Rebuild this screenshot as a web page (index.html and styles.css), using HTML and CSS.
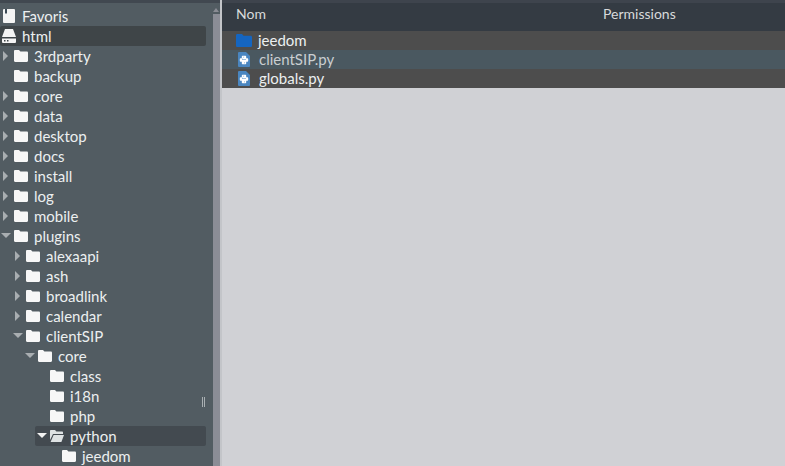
FILE: index.html
```html
<!DOCTYPE html>
<html lang="fr">
<head>
<meta charset="utf-8">
<title>Fichiers</title>
<link rel="stylesheet" href="styles.css">
</head>
<body>
<svg class="defs" width="0" height="0" aria-hidden="true">
  <symbol id="folder" viewBox="0 0 14 12"><path d="M1.200 0H5l1.400 1.600h6.400c.7 0 1.200.5 1.200 1.200v8c0 .7-.5 1.200-1.200 1.200H1.200C.5 12 0 11.500 0 10.800V1.200C0 .5.500 0 1.200 0z"/></symbol>
  <symbol id="pyfile" viewBox="0 0 12 15"><path fill="#4a86c0" d="M1 0h7l4 4v10a1 1 0 0 1-1 1H1a1 1 0 0 1-1-1V1a1 1 0 0 1 1-1z"/><path fill="#fff" d="M4.800 3.800h2.400c.6 0 1 .4 1 1v1.400h1c.6 0 1 .4 1 1v1.600c0 .6-.4 1-1 1h-1v1.400c0 .6-.4 1-1 1H4.800c-.6 0-1-.4-1-1V9.800h-1c-.6 0-1-.4-1-1V7.200c0-.6.400-1 1-1h1V4.800c0-.6.400-1 1-1z"/><path fill="#4a86c0" d="M5 7.400h3v.6H4.400v-1c0-.3.300-.6.600-.6zM5.300 4.800h.8v.8h-.8zM6.200 10.400h.8v.8h-.8z"/></symbol>
</svg>
<div class="app">
  <aside class="sidebar">
    <div class="tree">
      <div class="row root"><svg class="root-icon" viewBox="0 0 12 14"><path fill="#f4f4f4" d="M1 0h10a1 1 0 0 1 1 1v12a1 1 0 0 1-1 1H1a1 1 0 0 1-1-1V1a1 1 0 0 1 1-1z"/><path fill="#3c4a55" d="M2 0h2v5L3 4 2 5z"/></svg><span>Favoris</span></div>
      <div class="row root selected"><svg class="root-icon drive" viewBox="0 0 14 14"><path fill="#f4f4f4" d="M3 0h8l3 8H0z"/><path fill="#f4f4f4" d="M0 9.500h14V13a1 1 0 0 1-1 1H1a1 1 0 0 1-1-1z"/><path fill="#3c4448" d="M2 11h1.500v1.500H2zM5 11h1.500v1.500H5z"/></svg><span>html</span></div>
      <div class="row d0"><i class="arrow closed"></i><svg class="folder"><use href="#folder"/></svg><span>3rdparty</span></div>
      <div class="row d0"><i class="arrow none"></i><svg class="folder"><use href="#folder"/></svg><span>backup</span></div>
      <div class="row d0"><i class="arrow closed"></i><svg class="folder"><use href="#folder"/></svg><span>core</span></div>
      <div class="row d0"><i class="arrow closed"></i><svg class="folder"><use href="#folder"/></svg><span>data</span></div>
      <div class="row d0"><i class="arrow closed"></i><svg class="folder"><use href="#folder"/></svg><span>desktop</span></div>
      <div class="row d0"><i class="arrow closed"></i><svg class="folder"><use href="#folder"/></svg><span>docs</span></div>
      <div class="row d0"><i class="arrow closed"></i><svg class="folder"><use href="#folder"/></svg><span>install</span></div>
      <div class="row d0"><i class="arrow closed"></i><svg class="folder"><use href="#folder"/></svg><span>log</span></div>
      <div class="row d0"><i class="arrow closed"></i><svg class="folder"><use href="#folder"/></svg><span>mobile</span></div>
      <div class="row d0"><i class="arrow open"></i><svg class="folder"><use href="#folder"/></svg><span>plugins</span></div>
      <div class="row d1"><i class="arrow closed"></i><svg class="folder"><use href="#folder"/></svg><span>alexaapi</span></div>
      <div class="row d1"><i class="arrow closed"></i><svg class="folder"><use href="#folder"/></svg><span>ash</span></div>
      <div class="row d1"><i class="arrow closed"></i><svg class="folder"><use href="#folder"/></svg><span>broadlink</span></div>
      <div class="row d1"><i class="arrow closed"></i><svg class="folder"><use href="#folder"/></svg><span>calendar</span></div>
      <div class="row d1"><i class="arrow open"></i><svg class="folder"><use href="#folder"/></svg><span>clientSIP</span></div>
      <div class="row d2"><i class="arrow open"></i><svg class="folder"><use href="#folder"/></svg><span>core</span></div>
      <div class="row d3"><i class="arrow none"></i><svg class="folder"><use href="#folder"/></svg><span>class</span></div>
      <div class="row d3"><i class="arrow none"></i><svg class="folder"><use href="#folder"/></svg><span>i18n</span></div>
      <div class="row d3"><i class="arrow none"></i><svg class="folder"><use href="#folder"/></svg><span>php</span></div>
      <div class="row d3 current"><i class="arrow open bright"></i><svg class="folder" viewBox="0 0 14 12"><path fill="#dfe3e4" d="M1 0h4l1.400 1.600H12c.6 0 1 .4 1 1V4H3L0 10V1c0-.6.400-1 1-1z"/><path fill="#dfe3e4" d="M3.600 5H14l-2.600 7H.6z"/></svg><span>python</span></div>
      <div class="row d4"><i class="arrow none"></i><svg class="folder"><use href="#folder"/></svg><span>jeedom</span></div>
    </div>
    <div class="resize-grip"></div>
    <div class="scrollbar"><div class="scroll-up"></div><div class="scroll-thumb"></div></div>
  </aside>
  <div class="divider"></div>
  <main class="files">
    <div class="head"><div class="col-name">Nom</div><div class="col-perm">Permissions</div></div>
    <div class="file odd"><svg class="dir-icon" viewBox="0 0 16 13"><path fill="#1565c0" d="M1.300 0H6l1.500 1.800h7.200c.7 0 1.300.6 1.300 1.300v8.600c0 .7-.6 1.300-1.300 1.300H1.300C.6 13 0 12.400 0 11.700V1.300C0 .6.600 0 1.300 0z"/></svg><span>jeedom</span></div>
    <div class="file even"><svg class="file-icon"><use href="#pyfile"/></svg><span>clientSIP.py</span></div>
    <div class="file odd"><svg class="file-icon"><use href="#pyfile"/></svg><span>globals.py</span></div>
  </main>
</div>
</body>
</html>
```
FILE: styles.css
```css
* { box-sizing: border-box; }
html, body { margin: 0; height: 466px; overflow: hidden; }
body { font-family: "Lato", "Liberation Sans", sans-serif; font-size: 15px; color: #eceff0; background: #d0d1d5; }
.defs { position: absolute; }
.app { display: flex; height: 466px; }
.sidebar { position: relative; width: 220px; flex: none; background: #525c62; border-top: 3px solid #414850; display: flex; overflow: hidden; }
.tree { width: 206px; flex: none; padding-top: 3px; margin-right: 7px; }
.row { display: flex; align-items: center; height: 20px; white-space: nowrap; }
.row span { line-height: 20px; }
.root { padding-left: 3px; }
.root-icon { width: 12px; height: 14px; margin-right: 7px; flex: none; }
.root-icon.drive { width: 14px; margin-left: -1px; margin-right: 6px; }
.selected { background: #3f4548; border-radius: 2px; height: 20px; }
.current { background: #434a50; border-radius: 2px; }
.d0 { padding-left: 2px; }
.d1 { padding-left: 14px; }
.d2 { padding-left: 26px; }
.d3 { padding-left: 38px; }
.d4 { padding-left: 50px; }
.current { margin-left: 35px; padding-left: 3px; }
.arrow { width: 8px; height: 10px; margin-right: 4px; flex: none; display: block; position: relative; }
.arrow.closed::before { content: ""; position: absolute; left: 1px; top: 0; border-left: 5px solid #a9aeb1; border-top: 5px solid transparent; border-bottom: 5px solid transparent; }
.arrow.open::before { content: ""; position: absolute; left: -1px; top: 2px; border-top: 5px solid #a9aeb1; border-left: 5px solid transparent; border-right: 5px solid transparent; }
.arrow.bright::before { border-top-color: #f2f2f2; }
.folder { width: 14px; height: 12px; margin-right: 6px; flex: none; fill: #f7f7f7; }
.resize-grip { position: absolute; left: 202px; top: 394px; width: 3px; height: 10px; border-left: 1px solid #a9afb2; border-right: 1px solid #a9afb2; }
.scrollbar { position: absolute; right: 0; top: 0; width: 7px; height: 100%; background: #525c62; }
.scroll-up { height: 11px; position: relative; }
.scroll-up::before { content: ""; position: absolute; left: 0; top: 5px; border-bottom: 4px solid #8a8c94; border-left: 3.500px solid transparent; border-right: 3.500px solid transparent; }
.scroll-thumb { height: 100%; background: #8b8d96; }
.divider { width: 2px; flex: none; background: #c3c5c9; }
.files { flex: 1; min-width: 0; background: #d0d1d5; }
.head { height: 31px; display: flex; align-items: center; padding-bottom: 8px; background: #343b43; border-top: 3px solid #3e444d; font-size: 14px; color: #d8dadb; }
.col-name { width: 381px; padding-left: 14px; }
.col-perm { flex: 1; }
.file { height: 19px; display: flex; align-items: center; padding-left: 16px; white-space: nowrap; }
.file span { margin-top: -2px; }
.file.odd { background: #4d4d4d; }
.file.even { background: #4a5860; color: #c9ced1; }
.dir-icon { width: 16px; height: 13px; margin-left: -2px; margin-right: 6px; flex: none; }
.file-icon { width: 12px; height: 15px; margin-right: 9px; flex: none; }
```
